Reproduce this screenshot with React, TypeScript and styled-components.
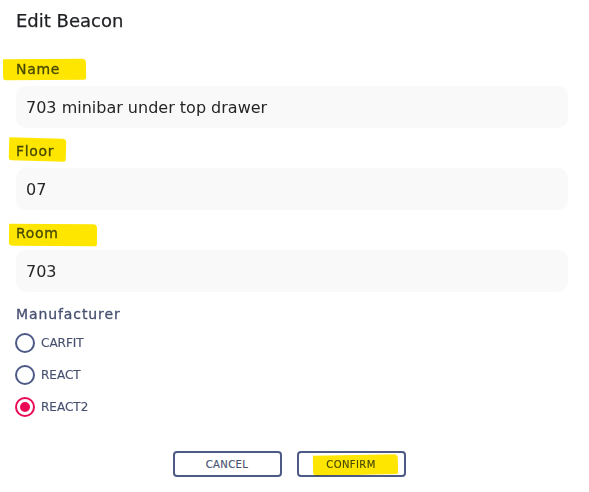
import React from "react";
import styled, { createGlobalStyle } from "styled-components";

const Global = createGlobalStyle`
  html, body { margin: 0; padding: 0; background: #ffffff; }
  body { font-family: "DejaVu Sans", "Open Sans", sans-serif; }
  * { box-sizing: border-box; }
`;

const Page = styled.div`
  width: 589px;
  height: 492px;
  padding: 10px 21px 0 16px;
  display: flex;
  flex-direction: column;
  position: relative;
  overflow: hidden;
`;

const Title = styled.h2`
  margin: 0;
  font-size: 18px;
  line-height: 22px;
  font-weight: 500;
  color: #1f2024;
  -webkit-text-stroke: 0.25px #1f2024;
`;

const Fields = styled.div`
  margin-top: 28px;
  display: flex;
  flex-direction: column;
  gap: 14px;
`;

const Field = styled.div`
  display: flex;
  flex-direction: column;
  align-items: flex-start;
  gap: 8px;
`;

const Label = styled.span`
  position: relative;
  display: inline-block;
  font-size: 14px;
  line-height: 18px;
  font-weight: 500;
  letter-spacing: 0.7px;
  color: #47516f;
  -webkit-text-stroke: 0.3px #47516f;
`;

const Marker = styled.span<{ $l: number; $t: number; $w: number; $h: number; $r?: number }>`
  position: absolute;
  left: ${(p) => p.$l}px;
  top: ${(p) => p.$t}px;
  width: ${(p) => p.$w}px;
  height: ${(p) => p.$h}px;
  background: #ffe600;
  mix-blend-mode: multiply;
  border-radius: 1px 4px 2px 3px;
  transform: rotate(${(p) => p.$r ?? 0}deg);
  pointer-events: none;
`;

const Input = styled.div`
  width: 100%;
  height: 42px;
  border-radius: 10px;
  background: #f9f9f9;
  padding: 0 10px;
  display: flex;
  align-items: center;
  font-size: 16px;
  color: #262626;
`;

const Group = styled.div`
  margin-top: 13px;
  display: flex;
  flex-direction: column;
`;

const GroupLabel = styled(Label)`
  margin-bottom: 4px;
  letter-spacing: 0.9px;
`;

const RadioRow = styled.div`
  height: 32px;
  display: flex;
  align-items: center;
  gap: 6px;
  font-size: 12px;
  color: #47516f;
  -webkit-text-stroke: 0.15px #47516f;
`;

const RadioCircle = styled.span<{ $on?: boolean }>`
  width: 20px;
  height: 20px;
  border-radius: 50%;
  border: 2px solid ${(p) => (p.$on ? "#ea0a55" : "#4c5a85")};
  display: flex;
  align-items: center;
  justify-content: center;
  margin-left: -1px;
  &::after {
    content: "";
    display: ${(p) => (p.$on ? "block" : "none")};
    width: 10px;
    height: 10px;
    border-radius: 50%;
    background: #ea0a55;
  }
`;

const Actions = styled.div`
  margin-top: 28px;
  display: flex;
  justify-content: center;
  gap: 15px;
  padding-right: 6px;
`;

const Button = styled.button`
  position: relative;
  width: 109px;
  height: 26px;
  border: 2px solid #4c5a85;
  border-radius: 4px;
  background: #fff;
  font-family: inherit;
  font-size: 10px;
  letter-spacing: 0.4px;
  color: #47516f;
  -webkit-text-stroke: 0.15px #47516f;
  text-transform: uppercase;
  padding: 0;
`;

const BtnText = styled.span`
  position: relative;
`;

const options = [
  { name: "CARFIT", on: false },
  { name: "REACT", on: false },
  { name: "REACT2", on: true },
];

export default function App() {
  return (
    <>
      <Global />
      <Page>
        <Title>Edit Beacon</Title>
        <Fields>
          <Field>
            <Label>
              Name
              <Marker $l={-13} $t={-1} $w={83} $h={21} $r={-0.5} />
            </Label>
            <Input>703 minibar under top drawer</Input>
          </Field>
          <Field>
            <Label>
              Floor
              <Marker $l={-7} $t={-4} $w={57} $h={23} $r={1.5} />
            </Label>
            <Input>07</Input>
          </Field>
          <Field>
            <Label>
              Room
              <Marker $l={-7} $t={0} $w={88} $h={22} $r={0.5} />
            </Label>
            <Input>703</Input>
          </Field>
        </Fields>
        <Group>
          <GroupLabel>Manufacturer</GroupLabel>
          {options.map((o) => (
            <RadioRow key={o.name}>
              <RadioCircle $on={o.on} />
              {o.name}
            </RadioRow>
          ))}
        </Group>
        <Actions>
          <Button>Cancel</Button>
          <Button>
            <BtnText>Confirm</BtnText>
            <Marker $l={14} $t={2} $w={85} $h={20} $r={-1} />
          </Button>
        </Actions>
      </Page>
    </>
  );
}
